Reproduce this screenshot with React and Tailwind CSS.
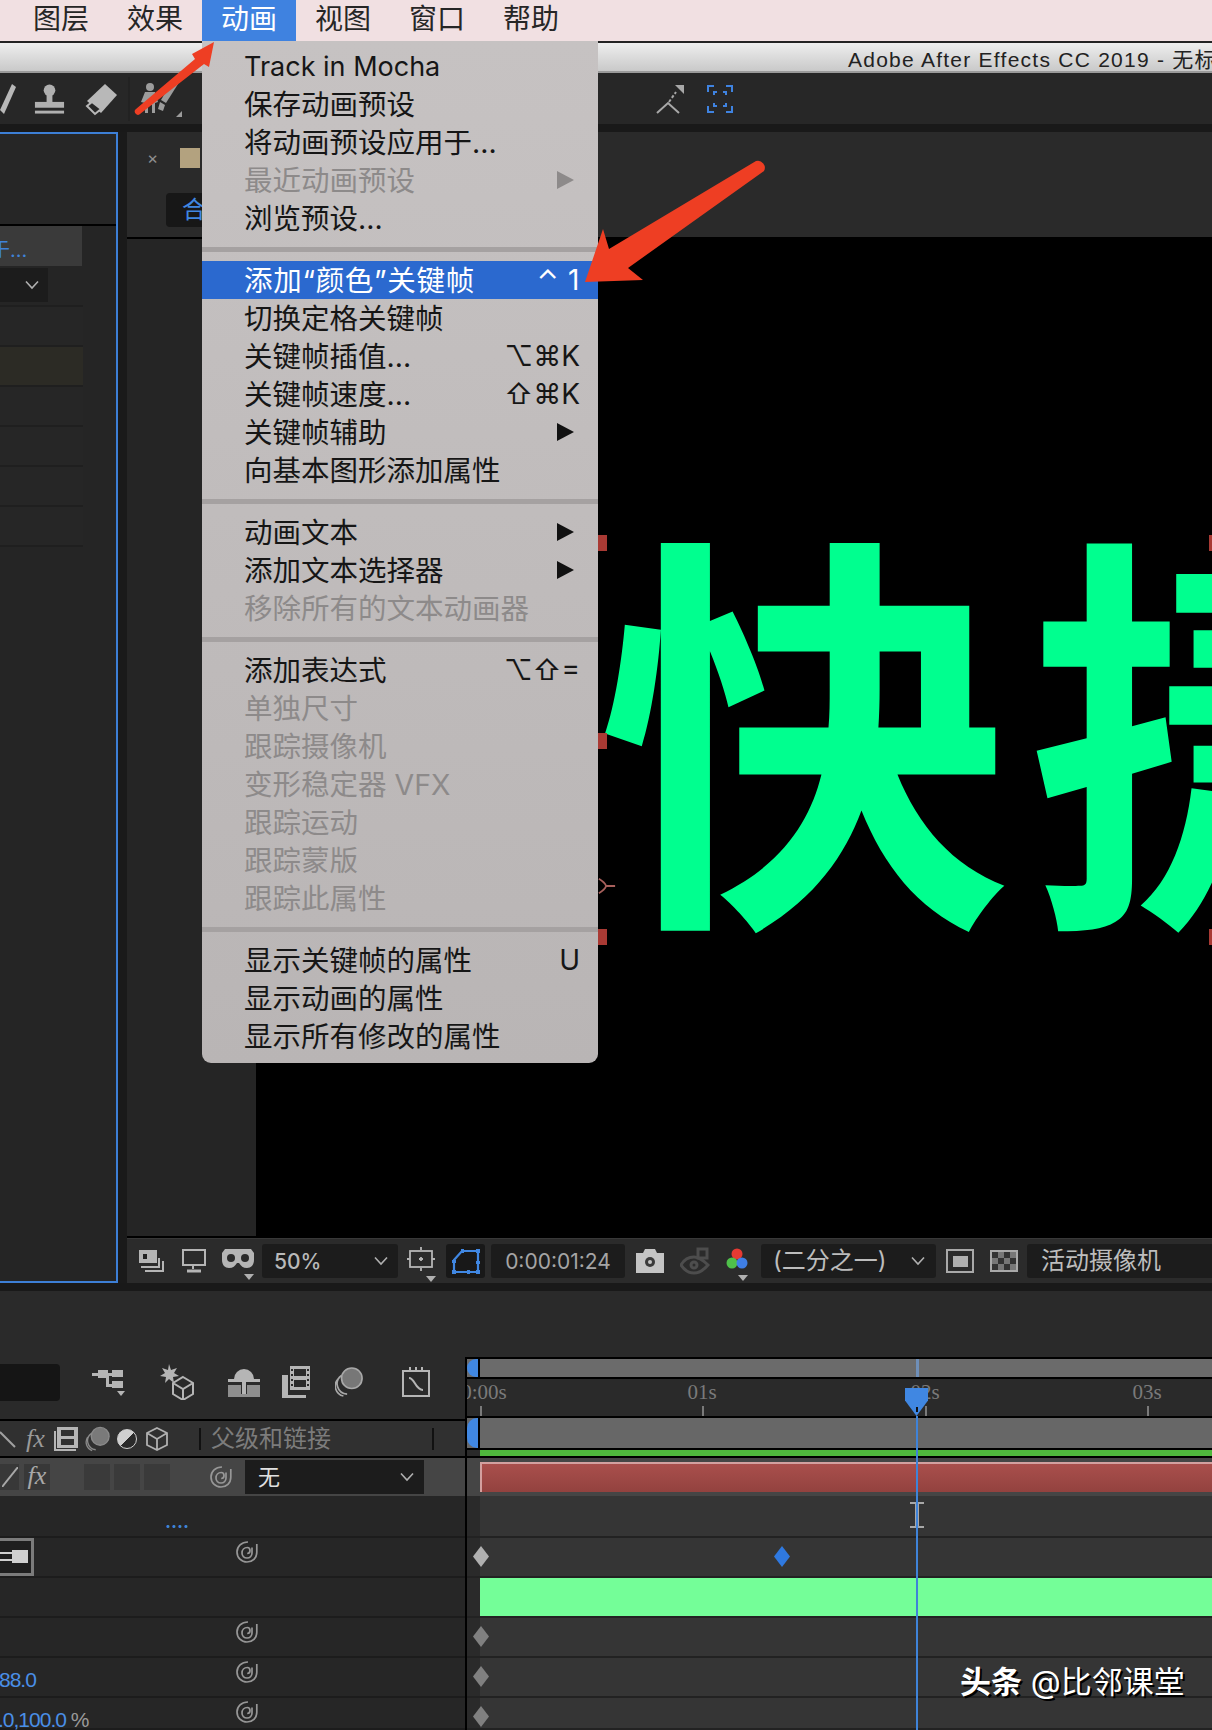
const ui = "font-['Inter','Noto_Sans_CJK_SC','DejaVu_Sans',sans-serif]";

function Spiral({ className = "" }) {
  return (
    <svg viewBox="0 0 24 24" className={`w-[24px] h-[24px] ${className}`} fill="none" stroke="#979797" strokeWidth="1.700">
      <path d="M13 2c-6.500 0-11 4.400-11 10 0 5.800 4.400 10 10 10 5.400 0 9.800-3.900 9.800-9.800V4" />
      <path d="M17 7.500V13c0 2.900-2.200 5-5 5-2.900 0-5-2-5-5 0-3.200 2.300-5.500 5.200-5.500 1.700 0 2.800 1.400 2.800 3 0 1.900-1.300 3-2.800 3" />
    </svg>
  );
}
function Diamond({ x, color = "#808080", y = 18 }) {
  return (
    <span className="absolute w-[16px] h-[21px]" style={{ left: x - 8, top: y - 10, background: color, clipPath: "polygon(50% 0,100% 50%,50% 100%,0 50%)" }} />
  );
}
function Chevron({ className = "" }) {
  return (
    <svg viewBox="0 0 14 10" className={`w-[14px] h-[10px] ${className}`} fill="none" stroke="#b0b0b0" strokeWidth="1.600">
      <path d="M1 1.500 7 8l6-6.500" />
    </svg>
  );
}
function Drop() {
  return <span className="absolute right-0 -bottom-[7px] w-0 h-0 border-l-[5px] border-r-[5px] border-t-[6px] border-l-transparent border-r-transparent border-t-[#b0b0b0]" />;
}

function MenuRow({ label, right, arrow, disabled, active, latin }) {
  const color = active ? "text-white bg-[#2b69cf] tracking-[0.700px]" : disabled ? "text-[#8d8a8a]" : "text-[#161616]";
  return (
    <div className={`h-[38px] flex items-center pl-[42px] pr-[18px] ${color}`}>
      <span className={latin ? "text-[27px] leading-none" : "text-[28.500px] leading-none mt-[2px]"}>{label}</span>
      <span className="flex-1" />
      {right && <span className="text-[28px] leading-none">{right}</span>}
      {arrow && (
        <span className={`w-0 h-0 mr-[6px] border-t-[9px] border-b-[9px] border-l-[17px] border-t-transparent border-b-transparent ${disabled ? "border-l-[#8d8a8a]" : "border-l-[#111111]"}`} />
      )}
    </div>
  );
}
function MenuSep() {
  return (
    <div className="h-[24px] flex items-center">
      <div className="h-[5px] w-full bg-[#a5a1a1]" />
    </div>
  );
}
function Menu() {
  return (
    <div className={`absolute left-[202px] top-[41px] w-[396px] pt-[6px] pb-[8px] rounded-b-[9px] bg-gradient-to-b from-[#c6c2c2] to-[#b9b5b5] ${ui}`}>
      <MenuRow label="Track in Mocha" latin />
      <MenuRow label="保存动画预设" />
      <MenuRow label="将动画预设应用于..." />
      <MenuRow label="最近动画预设" disabled arrow />
      <MenuRow label="浏览预设..." />
      <MenuSep />
      <MenuRow label="添加“颜色”关键帧" active right="⌃ 1" />
      <MenuRow label="切换定格关键帧" />
      <MenuRow label="关键帧插值..." right="⌥⌘K" />
      <MenuRow label="关键帧速度..." right="⇧⌘K" />
      <MenuRow label="关键帧辅助" arrow />
      <MenuRow label="向基本图形添加属性" />
      <MenuSep />
      <MenuRow label="动画文本" arrow />
      <MenuRow label="添加文本选择器" arrow />
      <MenuRow label="移除所有的文本动画器" disabled />
      <MenuSep />
      <MenuRow label="添加表达式" right="⌥⇧=" />
      <MenuRow label="单独尺寸" disabled />
      <MenuRow label="跟踪摄像机" disabled />
      <MenuRow label="变形稳定器 VFX" disabled />
      <MenuRow label="跟踪运动" disabled />
      <MenuRow label="跟踪蒙版" disabled />
      <MenuRow label="跟踪此属性" disabled />
      <MenuSep />
      <MenuRow label="显示关键帧的属性" right="U" />
      <MenuRow label="显示动画的属性" />
      <MenuRow label="显示所有修改的属性" />
    </div>
  );
}

function MenuBar() {
  const items = ["图层", "效果", "动画", "视图", "窗口", "帮助"];
  return (
    <div className={`h-[41px] shrink-0 bg-[#f1e0e2] flex pl-[14px] ${ui}`}>
      {items.map((t) => (
        <div key={t} className={`w-[94px] pb-[3px] flex items-center justify-center text-[28px] leading-none ${t === "动画" ? "bg-[#3f82e0] text-white" : "text-[#262626]"}`}>
          {t}
        </div>
      ))}
    </div>
  );
}

function TopToolbar() {
  return (
    <div className="h-[51px] shrink-0 bg-[#272727] flex items-center">
      <svg viewBox="0 0 16 34" className="w-[16px] h-[34px]"><path d="M0 28 12 2l4 3L4 32Z" fill="#b8b8b8" /></svg>
      <svg viewBox="0 0 34 32" className="ml-[17px] w-[33px] h-[32px]" fill="#b0b0b0">
        <circle cx="17" cy="7" r="6" /><rect x="14" y="10" width="6" height="10" /><rect x="2" y="19" width="30" height="6" /><rect x="2" y="28" width="30" height="3" />
      </svg>
      <svg viewBox="0 0 34 34" className="ml-[18px] w-[34px] h-[34px]">
        <path d="M21 2 33 13 17 31 3 19Z" fill="#b8b8b8" /><path d="M8 20 3 24l8 8 6-5Z" fill="#272727" stroke="#b8b8b8" strokeWidth="2" />
      </svg>
      <div className="ml-[10px] w-[2px] h-[44px] bg-[#222222]" />
      <svg viewBox="0 0 48 36" className="ml-[6px] w-[48px] h-[36px]" fill="#9c9c9c">
        <circle cx="14" cy="6" r="4" /><path d="M9 11h10l3 10-3 1v10h-3v-8h-4v8H9V22l-4-1Z" />
        <path d="M36 0 42 3 30 22l-5-3Z" /><path d="M24 21l5 3-2 6-5-2Z" /><path d="M46 30v6h-6Z" />
      </svg>
      <svg viewBox="0 0 30 32" className="ml-[471px] w-[30px] h-[32px]" fill="none" stroke="#a8a8a8" strokeWidth="2">
        <path d="M2 30 13 20l11 10" /><path d="M14 19 21 9" strokeDasharray="3 2" /><path d="M20 2h9v9Z" fill="#a8a8a8" stroke="none" />
      </svg>
      <svg viewBox="0 0 26 28" className="ml-[22px] w-[26px] h-[28px]" fill="none" stroke="#3f83e0" strokeWidth="2">
        <path d="M1 7V1h6M19 1h6v6M25 21v6h-6M7 27H1v-6" /><path d="M7 10V7h3M16 7h3v3M19 18v3h-3M10 21H7v-3" />
      </svg>
    </div>
  );
}

function LeftRow({ tint }) {
  return <div className={`h-[40px] w-[83px] border-b-2 border-[#1f1f1f] ${tint ? "bg-[#2c2b25]" : "bg-[#262626]"}`} />;
}
function LeftPanel() {
  return (
    <div className={`w-[118px] shrink-0 border-t-2 border-r-2 border-b-2 border-[#3d7fd6] bg-[#252525] flex flex-col overflow-hidden ${ui}`}>
      <div className="h-[92px] shrink-0 border-b-2 border-black bg-[#262626]" />
      <div className="h-[40px] shrink-0 w-[82px] bg-[#3a3a3a] pt-[8px] flex items-center text-[#3f83d8] text-[20px] leading-none whitespace-nowrap">
        <span className="-ml-[10px]">于...</span>
      </div>
      <div className="h-[41px] shrink-0 w-[83px] pt-[2px] border-b-2 border-[#1f1f1f]">
        <div className="h-[34px] w-[48px] bg-[#1c1c1c] flex items-center justify-end pr-[9px]">
          <Chevron />
        </div>
      </div>
      <LeftRow />
      <LeftRow tint />
      <LeftRow />
      <LeftRow />
      <LeftRow />
      <LeftRow />
    </div>
  );
}

function CompToolbar() {
  return (
    <div className={`h-[45px] shrink-0 bg-[#2b2b2b] flex items-center border-t border-[#383838] ${ui}`}>
      <svg viewBox="0 0 26 24" className="ml-[11px] w-[26px] h-[24px]" fill="none" stroke="#b5b5b5" strokeWidth="2">
        <rect x="1" y="1" width="18" height="13" fill="#b5b5b5" stroke="none" /><rect x="5" y="5" width="4" height="5" fill="#222222" stroke="none" />
        <path d="M3 18h18v-9M7 22h18V12" />
      </svg>
      <svg viewBox="0 0 24 24" className="ml-[18px] w-[24px] h-[24px]" fill="none" stroke="#b5b5b5" strokeWidth="2">
        <rect x="1" y="1" width="22" height="15" /><path d="M11 17v3" /><path d="M5 22h14" strokeWidth="3" />
      </svg>
      <div className="relative ml-[16px] w-[32px] h-[24px]">
        <svg viewBox="0 0 32 20" className="w-[32px] h-[20px]" fill="#b5b5b5">
          <path d="M3 0h26l3 4v7c0 5-3 8-7 8s-6-2-8-5h-2c-2 3-4 5-8 5s-7-3-7-8V4Z" />
          <circle cx="9" cy="9" r="4" fill="#2b2b2b" /><circle cx="23" cy="9" r="4" fill="#2b2b2b" />
        </svg>
        <Drop />
      </div>
      <div className="ml-[8px] w-[136px] h-[34px] bg-[#1c1c1c] rounded-[3px] flex items-center pl-[12px] pr-[10px] text-[#b9b9b9] text-[21px] leading-none font-medium">
        <span>50%</span><span className="flex-1" /><Chevron />
      </div>
      <div className="relative ml-[9px] w-[29px] h-[28px]">
        <svg viewBox="0 0 28 24" className="w-[28px] h-[24px]" fill="none" stroke="#b5b5b5" strokeWidth="1.800">
          <rect x="3" y="4" width="22" height="16" /><path d="M14 0v3M14 21v3M0 12h3M25 12h3M14 10v4M12 12h4" />
        </svg>
        <Drop />
      </div>
      <div className="ml-[10px] w-[39px] h-[34px] bg-[#181818] rounded-[3px] flex items-center justify-center">
        <svg viewBox="0 0 28 26" className="w-[28px] h-[26px]" fill="none" stroke="#4087e2" strokeWidth="2.200">
          <path d="M10 3h16v21H2V12Z" />
          <path d="M9 1h3v4H9ZM24 1h4v4h-4ZM24 13h4v3h-4ZM24 22h4v4h-4ZM0 22h4v4H0ZM0 12h4v3H0ZM15 22h3v4h-3Z" fill="#4087e2" stroke="none" />
        </svg>
      </div>
      <div className="ml-[6px] w-[134px] h-[34px] bg-[#1c1c1c] rounded-[3px] flex items-center justify-center text-[#a5a5a5] text-[21px] leading-none">
        0:00:01:24
      </div>
      <svg viewBox="0 0 28 24" className="ml-[11px] w-[28px] h-[24px]">
        <path d="M0 4h7l2-4h10l2 4h7v20H0Z" fill="#c4c4c4" /><circle cx="14" cy="13" r="5" fill="#3a3a3a" /><circle cx="14" cy="13" r="2" fill="#c4c4c4" />
      </svg>
      <svg viewBox="0 0 30 28" className="ml-[16px] w-[30px] h-[28px]" fill="none" stroke="#4d4d4d" strokeWidth="3">
        <path d="M1 18c4-7 9-8 13-8s9 3 14 8c-5 6-9 8-14 8S5 24 1 18Z" /><circle cx="14" cy="18" r="3" /><rect x="18" y="2" width="9" height="9" />
      </svg>
      <div className="relative ml-[16px] w-[22px] h-[26px]">
        <svg viewBox="0 0 22 22" className="w-[22px] h-[22px]">
          <circle cx="11" cy="6" r="5.500" fill="#e63a33" /><circle cx="6" cy="15" r="5.500" fill="#4fc04a" /><circle cx="16" cy="15" r="5.500" fill="#3f7fe6" />
        </svg>
        <Drop />
      </div>
      <div className="ml-[13px] w-[175px] h-[34px] bg-[#1c1c1c] rounded-[3px] flex items-center pl-[12px] pr-[11px] text-[#bdbdbd] text-[24px] leading-none whitespace-nowrap">
        <span>(二分之一)</span><span className="flex-1" /><Chevron />
      </div>
      <div className="ml-[10px] w-[28px] h-[24px] border-2 border-[#a9a9a9] flex items-center justify-center">
        <span className="w-[15px] h-[11px] bg-[#b0b0b0]" />
      </div>
      <div className="ml-[16px] w-[28px] h-[22px] border-2 border-[#a9a9a9] grid grid-cols-4 grid-rows-3">
        {[0, 1, 0, 1, 1, 0, 1, 0, 0, 1, 0, 1].map((v, i) => (
          <span key={i} className={v ? "bg-[#777777]" : "bg-[#333333]"} />
        ))}
      </div>
      <div className="ml-[9px] flex-1 h-[34px] bg-[#1c1c1c] rounded-l-[3px] flex items-center pl-[14px] text-[#bdbdbd] text-[24px] leading-none">
        活动摄像机
      </div>
    </div>
  );
}

function Handle({ className }) {
  return <span className={`absolute w-[10px] h-[16px] bg-[#a93a34] ${className}`} />;
}

function CompPanel() {
  return (
    <div className={`flex-1 flex flex-col min-w-0 bg-[#2a2a2a] ${ui}`}>
      <div className="h-[105px] shrink-0 bg-[#2a2a2a] pl-[20px] pt-[16px] overflow-hidden">
        <div className="flex items-center h-[20px]">
          <span className="text-[#8f8f8f] text-[17px] leading-none">×</span>
          <span className="ml-[22px] w-[20px] h-[20px] bg-[#b3a27f]" />
        </div>
        <div className="mt-[25px] ml-[19px] w-[80px] h-[34px] bg-[#171717] rounded-[4px] pl-[16px] flex items-center text-[#4087e2] text-[24px] leading-none">
          合
        </div>
      </div>
      <div className="h-[2px] shrink-0 bg-black" />
      <div className="flex-1 flex min-h-0">
        <div className="w-[129px] shrink-0 bg-[#252525] border-b-2 border-black" />
        <div className="relative flex-1 bg-black overflow-hidden">
          <span className="absolute left-[342px] top-[269px] text-[413px] tracking-[17px] leading-none font-bold text-[#00ff8f] whitespace-nowrap font-['Noto_Sans_CJK_SC',sans-serif]">
            快捷
          </span>
          <Handle className="left-[341px] top-[296px]" />
          <Handle className="left-[341px] top-[494px]" />
          <Handle className="left-[341px] top-[690px]" />
          <Handle className="left-[953px] top-[296px]" />
          <Handle className="left-[953px] top-[690px]" />
          <svg viewBox="0 0 20 24" className="absolute left-[342px] top-[636px] w-[18px] h-[22px]" fill="none" stroke="#a8605c" strokeWidth="2">
            <path d="M1 4c5 3 7 5 8 8-1 3-3 5-8 8M9 12h10" />
          </svg>
        </div>
      </div>
      <CompToolbar />
    </div>
  );
}

function Icons() {
  return (
    <>
      <svg viewBox="0 0 34 28" className="ml-[32px] w-[34px] h-[28px]" fill="#b5b5b5">
        <rect x="0" y="5" width="8" height="3" /><rect x="6" y="2" width="10" height="8" /><path d="M14 5h8v3h-5v8h5v3h-8Z" /><rect x="20" y="2" width="11" height="7" /><rect x="20" y="13" width="11" height="7" /><path d="M25 23h8l-4 5Z" />
      </svg>
      <svg viewBox="0 0 34 36" className="ml-[34px] w-[34px] h-[36px]">
        <path d="M9 0l2 6 6-2-3 5 5 3-6 1 1 6-5-4-4 4 1-6-6-1 5-3-3-5 6 2Z" fill="#b5b5b5" />
        <path d="M23 13 33 19v11l-10 6-10-6V19ZM13 19l10 6 10-6M23 25v11" fill="none" stroke="#b5b5b5" strokeWidth="2" />
      </svg>
      <svg viewBox="0 0 32 30" className="ml-[34px] w-[32px] h-[30px]" fill="#b5b5b5">
        <path d="M6 12a10 10 0 0 1 20 0Z" /><rect x="0" y="12" width="32" height="3" /><rect x="14" y="15" width="4" height="12" /><path d="M0 18h13v9h6v-9h13v12H0Z" fill="#8e8e8e" />
      </svg>
      <svg viewBox="0 0 28 32" className="ml-[22px] w-[28px] h-[32px]" fill="#b5b5b5">
        <path d="M8 0h20v24H8Z" /><rect x="12" y="3" width="12" height="7" fill="#2a2a2a" /><rect x="12" y="14" width="12" height="7" fill="#2a2a2a" />
        <path d="M0 9h6v20h18v3H0Z" />
        <path d="M9 3h2v2H9ZM9 8h2v2H9ZM9 13h2v2H9ZM9 18h2v2H9ZM25 3h2v2h-2ZM25 8h2v2h-2ZM25 13h2v2h-2ZM25 18h2v2h-2Z" fill="#2a2a2a" />
      </svg>
      <svg viewBox="0 0 30 32" className="ml-[25px] w-[28px] h-[32px]" fill="none" stroke="#a8a8a8" strokeWidth="1.800">
        <circle cx="18" cy="12" r="11" fill="#777777" /><path d="M7 9a11 11 0 0 0 6 20M3 13a11 11 0 0 0 6 18" />
      </svg>
      <svg viewBox="0 0 30 32" className="ml-[38px] w-[30px] h-[32px]" fill="none" stroke="#b5b5b5" strokeWidth="2">
        <rect x="2" y="5" width="26" height="25" /><path d="M9 1v4M21 1v4M15 1v4M8 12c6 0 6 12 14 12" />
      </svg>
    </>
  );
}

function TlLeftRow({ children, h = "h-[40px]" }) {
  return <div className={`${h} relative border-b-2 border-[#1c1c1c] bg-[#262626]`}>{children}</div>;
}
function RowSpiral() {
  return <Spiral className="absolute left-[235px] top-[2px]" />;
}
function TimelineLeft() {
  return (
    <div className={`w-[465px] shrink-0 flex flex-col ${ui}`}>
      <div className="h-[62px] shrink-0 bg-[#2a2a2a] flex items-center pb-[12px]">
        <div className="w-[60px] h-[37px] bg-[#151515] rounded-r-[4px]" />
        <Icons />
      </div>
      <div className="h-[2px] bg-black" />
      <div className="h-[35px] bg-[#303030] flex items-center relative overflow-hidden">
        <svg viewBox="0 0 16 20" className="w-[16px] h-[20px]" fill="none" stroke="#a0a0a0" strokeWidth="2"><path d="M0 3 15 18" /></svg>
        <span className="ml-[10px] w-[22px] text-[#9a9a9a] text-[26px] italic leading-none font-['Liberation_Serif',serif]">fx</span>
        <svg viewBox="0 0 24 24" className="ml-[6px] w-[24px] h-[24px]" fill="#b5b5b5"><path d="M3 0h21v21H3Z" /><rect x="7" y="3" width="13" height="6" fill="#303030" /><rect x="7" y="12" width="13" height="6" fill="#303030" /><path d="M0 4h2v18h20v2H0Z" /></svg>
        <svg viewBox="0 0 28 28" className="ml-[7px] w-[25px] h-[28px]" fill="none" stroke="#8a8a8a" strokeWidth="1.500"><circle cx="17" cy="11" r="10" fill="#7a7a7a" /><path d="M7 8a10 10 0 0 0 5 18M3 12a10 10 0 0 0 5 15" /></svg>
        <span className="ml-[7px] w-[20px] h-[20px] rounded-full bg-gradient-to-br from-[#d0d0d0] from-50% to-[#2a2a2a] to-50% border border-[#d0d0d0]" />
        <svg viewBox="0 0 22 24" className="ml-[9px] w-[22px] h-[24px]" fill="none" stroke="#b0b0b0" strokeWidth="1.800"><path d="M11 1 21 6v12l-10 5L1 18V6ZM1 6l10 6 10-6M11 12v11" /></svg>
        <span className="ml-[31px] w-[2px] h-[22px] bg-[#111111]" />
        <span className="ml-[10px] text-[24px] text-[#7c7c7c] leading-none">父级和链接</span>
        <span className="ml-[101px] w-[2px] h-[22px] bg-[#111111]" />
      </div>
      <div className="h-[2px] bg-black" />
      <div className="h-[38px] bg-[#454545] relative flex items-center overflow-hidden">
        <span className="w-[19px] h-[26px] bg-[#383838] flex items-center justify-center">
          <svg viewBox="0 0 16 20" className="w-[16px] h-[20px]" fill="none" stroke="#a8a8a8" strokeWidth="2"><path d="M0 20 16 0" /></svg>
        </span>
        <span className="ml-[5px] w-[26px] h-[26px] bg-[#383838] text-center text-[#a8a8a8] text-[26px] italic leading-[24px] font-['Liberation_Serif',serif]">fx</span>
        <span className="ml-[34px] w-[26px] h-[26px] bg-[#3a3a3a]" />
        <span className="ml-[4px] w-[26px] h-[26px] bg-[#3a3a3a]" />
        <span className="ml-[4px] w-[26px] h-[26px] bg-[#3a3a3a]" />
        <Spiral className="ml-[39px]" />
        <div className="ml-[12px] w-[179px] h-[34px] bg-[#1c1c1c] flex items-center pl-[13px] pr-[10px] text-[22px] text-[#e0e0e0] leading-none">
          <span>无</span><span className="flex-1" /><Chevron />
        </div>
      </div>
      <div className="h-[42px] relative border-b-2 border-[#1c1c1c] bg-[#262626]">
        <span className="absolute left-[165px] top-[17px] text-[#3f83d8] text-[18px] font-bold leading-none">....</span>
      </div>
      <TlLeftRow>
        <RowSpiral />
        <div className="absolute -left-[4px] top-0 w-[38px] h-[38px] border-[3px] border-[#7b7b7b] bg-[#1f1f1f] flex items-center justify-center">
          <svg viewBox="0 0 30 14" className="w-[30px] h-[14px]" fill="#d0d0d0"><rect x="0" y="2" width="14" height="2" /><rect x="0" y="9" width="14" height="2" /><rect x="12" y="0" width="16" height="13" /></svg>
        </div>
      </TlLeftRow>
      <TlLeftRow />
      <TlLeftRow><RowSpiral /></TlLeftRow>
      <TlLeftRow>
        <RowSpiral />
        <span className="absolute -left-[1px] top-[11px] text-[#4a8fe6] text-[21px] leading-none font-['Liberation_Sans_Narrow','Liberation_Sans',sans-serif] tracking-[-1px]">88.0</span>
      </TlLeftRow>
      <TlLeftRow h="h-[32px]">
        <RowSpiral />
        <span className="absolute -left-[2px] top-[11px] text-[21px] leading-none whitespace-nowrap font-['Liberation_Sans',sans-serif] tracking-[-1px]">
          <span className="text-[#4a8fe6]">.0,100.0 </span><span className="text-[#9a9a9a]">%</span>
        </span>
      </TlLeftRow>
    </div>
  );
}

function TlRightRow({ children, h = "h-[40px]" }) {
  return (
    <div className={`${h} relative flex border-b-2 border-[#222222]`}>
      <span className="w-[13px] bg-[#2a2a2a]" />
      <span className="flex-1 bg-[#353535]" />
      {children}
    </div>
  );
}
function Tick({ x, label, dx = 0 }) {
  return (
    <>
      <span className="absolute top-[3px] -translate-x-1/2 text-[21px] text-[#7a7a7a] leading-none font-['Liberation_Serif',serif]" style={{ left: x + dx }}>{label}</span>
      <span className="absolute top-[27px] w-[2px] h-[10px] bg-[#7a7a7a]" style={{ left: x }} />
    </>
  );
}
function TimelineRight() {
  return (
    <div className="relative flex-1 flex flex-col min-w-0 overflow-hidden">
      <div className="h-[2px] bg-black" />
      <div className="h-[18px] flex bg-[#6b6b6b]">
        <span className="w-[13px] bg-[#4087e2] rounded-l-full border-r-2 border-black" />
      </div>
      <div className="h-[2px] bg-black" />
      <div className="h-[37px] bg-[#2a2a2a] relative overflow-hidden">
        <Tick x={13} dx={4} label="0:00s" />
        <Tick x={235} label="01s" />
        <Tick x={458} label="02s" />
        <Tick x={680} label="03s" />
      </div>
      <div className="h-[2px] bg-black" />
      <div className="h-[30px] flex bg-[#676767]">
        <span className="w-[13px] bg-[#4087e2] rounded-l-[10px] border-r-2 border-black" />
      </div>
      <div className="h-[2px] bg-black" />
      <div className="h-[6px] flex bg-[#2a2a2a]">
        <span className="w-[13px]" />
        <span className="flex-1 bg-[#4fb83d]" />
      </div>
      <div className="h-[2px] bg-black" />
      <div className="h-[38px] flex bg-[#454545] py-[4px]">
        <span className="w-[13px]" />
        <span className="flex-1 bg-gradient-to-b from-[#a94f4c] to-[#93423f] border-t-2 border-l-2 border-[#d3a09f]" />
      </div>
      <TlRightRow h="h-[42px]">
        <svg viewBox="0 0 14 26" className="absolute left-[443px] top-[6px] w-[14px] h-[26px]" fill="none" stroke="#a8a8a8" strokeWidth="2">
          <path d="M0 1h14M0 25h14" /><path d="M7 1v24" strokeWidth="4" />
        </svg>
      </TlRightRow>
      <TlRightRow>
        <Diamond x={14} color="#b0b0b0" />
        <Diamond x={315} color="#2f79e0" />
      </TlRightRow>
      <TlRightRow>
        <span className="absolute left-[13px] right-0 top-0 bottom-0 bg-[#74fe98]" />
      </TlRightRow>
      <TlRightRow><Diamond x={14} /></TlRightRow>
      <TlRightRow><Diamond x={14} /></TlRightRow>
      <TlRightRow h="h-[32px]"><Diamond x={14} /></TlRightRow>

      <span className="absolute left-[449px] top-[2px] w-[3px] h-[18px] bg-[#6f8fb8]" />
      <span className="absolute left-[449px] top-[59px] bottom-0 w-[2px] bg-[#3f83d8]" />
      <span className="absolute left-[438px] top-[31px] w-[23px] h-[28px] bg-[#4087e2] [clip-path:polygon(0_0,100%_0,100%_45%,50%_100%,0_45%)]" />
      <span className="absolute left-[449px] top-[50px] w-[2px] h-[5px] bg-[#111111]" />
      <span className={`absolute left-[493px] top-[309px] text-white text-[31px] leading-none whitespace-nowrap [text-shadow:2px_2px_0_#000] ${ui}`}>
        <b>头条</b> @比邻课堂
      </span>
    </div>
  );
}

function Arrows() {
  return (
    <>
      <svg viewBox="0 0 90 80" className="absolute left-[130px] top-[38px] w-[90px] h-[80px]">
        <path d="M84 4 62 16l3 5L6 71a3 3 0 0 0 4 5L74 26l5 3Z" fill="#ee3e23" />
      </svg>
      <svg viewBox="0 0 190 130" className="absolute left-[580px] top-[156px] w-[190px] h-[130px]">
        <path d="M5 126 23 73l6 20L176 5a7 7 0 0 1 8 10L48 112l15 12Z" fill="#ee3e23" />
      </svg>
    </>
  );
}

export default function App() {
  return (
    <div className={`relative w-[1212px] h-[1730px] overflow-hidden bg-[#1a1a1a] flex flex-col ${ui}`}>
      <MenuBar />
      <div className="h-[2px] shrink-0 bg-[#232323]" />
      <div className="h-[30px] shrink-0 pt-[4px] bg-gradient-to-b from-[#eeeeee] to-[#c9c9c9] border-b-2 border-[#9a9a9a] flex items-center pl-[848px] text-[21px] tracking-[1.250px] text-[#222222] leading-none whitespace-nowrap overflow-hidden font-['Liberation_Sans','Noto_Sans_CJK_SC',sans-serif]">
        Adobe After Effects CC 2019 - 无标题项目
      </div>
      <TopToolbar />
      <div className="h-[8px] shrink-0 bg-[#191919]" />
      <div className="flex-1 flex min-h-0 gap-[9px]">
        <LeftPanel />
        <CompPanel />
      </div>
      <div className="h-[8px] shrink-0 bg-[#191919]" />
      <div className="h-[439px] shrink-0 flex flex-col bg-[#2a2a2a]">
        <div className="h-[66px] shrink-0" />
        <div className="flex-1 flex min-h-0">
          <TimelineLeft />
          <div className="w-[2px] bg-black shrink-0" />
          <TimelineRight />
        </div>
      </div>
      <Menu />
      <Arrows />
    </div>
  );
}
